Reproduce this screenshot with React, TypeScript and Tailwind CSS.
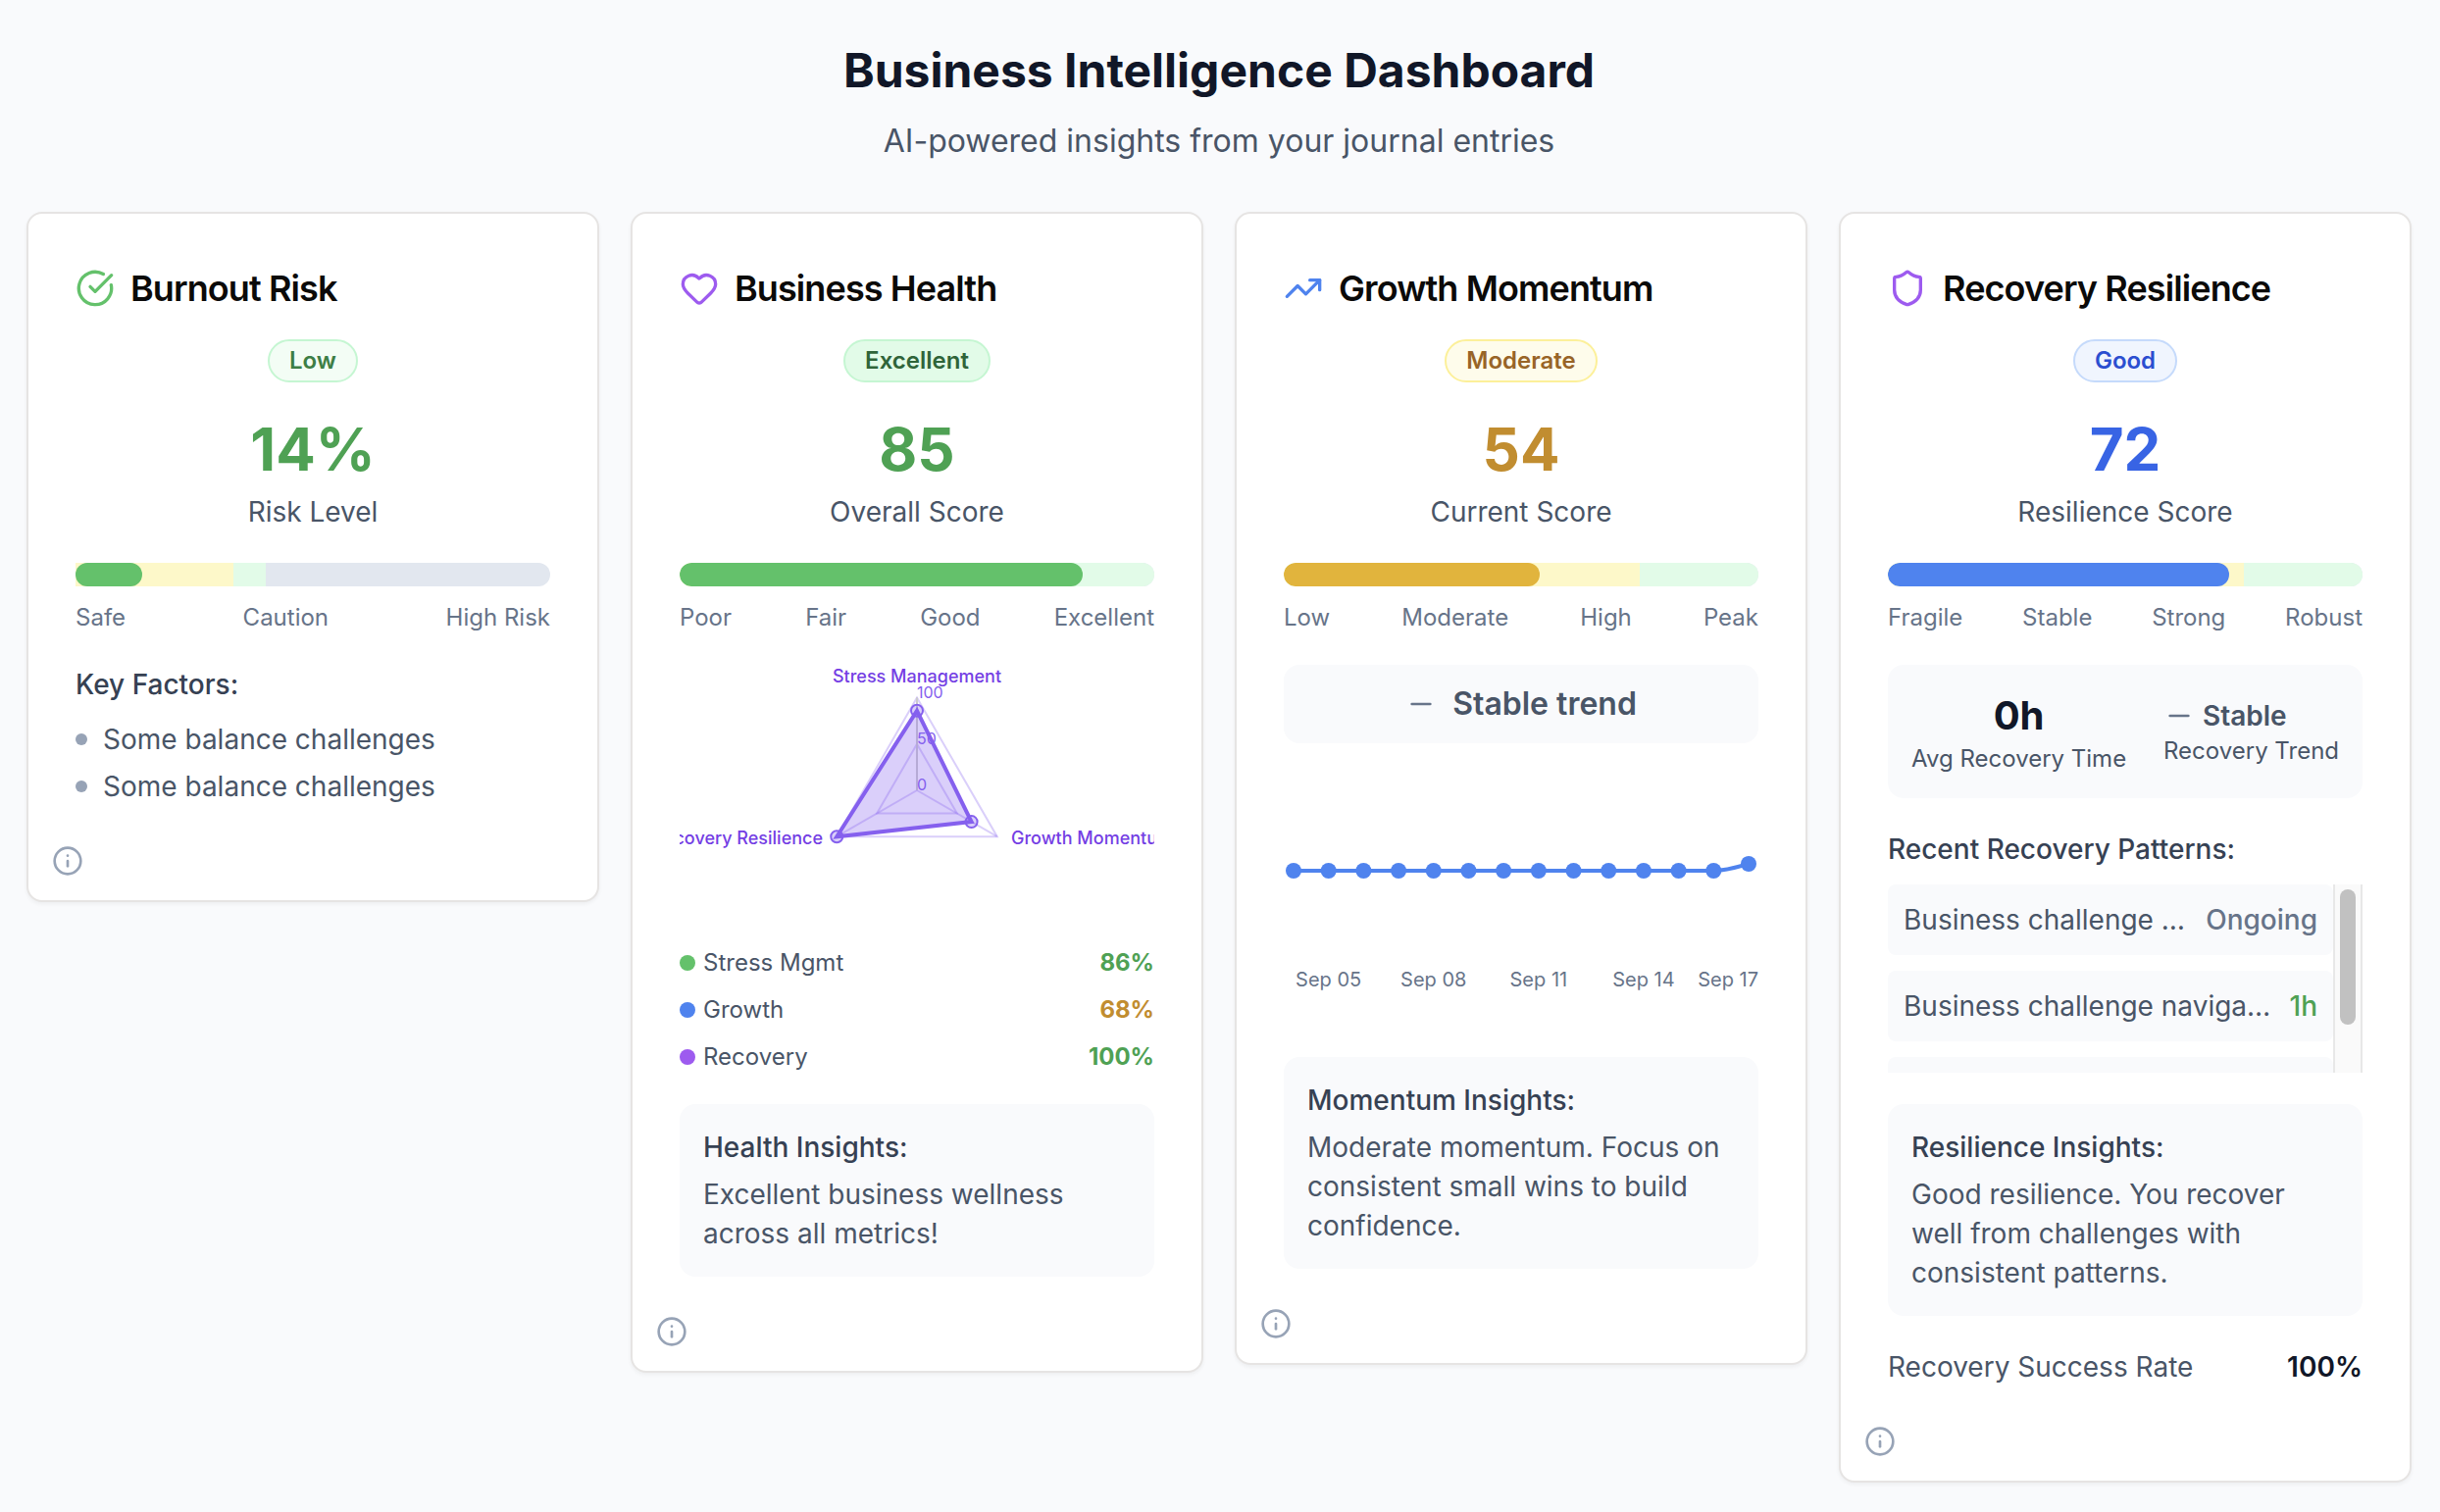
import type { ReactNode } from "react";
import { CircleCheckBig, Heart, Info, Minus, Shield, TrendingUp } from "lucide-react";

type Zone = { className: string; width: string };

function Card({ icon, title, children }: { icon: ReactNode; title: string; children: ReactNode }) {
  return (
    <section className="rounded-2xl border-2 border-[#e6e4e3] bg-white px-12 pt-12 pb-6 shadow-[0_2px_4px_0_rgba(0,0,0,0.05)]">
      <h2 className="flex items-center gap-4 text-4xl/[56px] font-semibold tracking-tight text-[#0b0a09]">
        {icon}
        {title}
      </h2>
      {children}
      <button
        type="button"
        aria-label={`About ${title}`}
        className="mt-10 -ml-6 block text-[#97a3b6]"
      >
        <Info className="size-8" />
      </button>
    </section>
  );
}

function Score({
  badge,
  badgeClass,
  value,
  valueClass,
  label,
}: {
  badge: string;
  badgeClass: string;
  value: string;
  valueClass: string;
  label: string;
}) {
  return (
    <div className="mt-6 flex flex-col items-center">
      <span className={`rounded-full border-2 px-5 py-1 text-2xl/8 font-semibold ${badgeClass}`}>{badge}</span>
      <span className={`mt-8 text-6xl/[72px] font-bold ${valueClass}`}>{value}</span>
      <span className="mt-2 text-[28px]/10 text-[#495567]">{label}</span>
    </div>
  );
}

function Gauge({
  value,
  fill,
  zones,
  labels,
  clip = true,
}: {
  value: number;
  fill: string;
  zones: Zone[];
  labels: string[];
  clip?: boolean;
}) {
  return (
    <div className="mt-8">
      <div className={`relative h-6 rounded-full bg-[#e2e7ef] ${clip ? "overflow-hidden" : ""}`}>
        {zones.map((z) => (
          <div key={z.className} className={`absolute inset-y-0 left-0 ${z.className}`} style={{ width: z.width }} />
        ))}
        <div className={`absolute inset-y-0 left-0 rounded-full ${fill}`} style={{ width: `${value}%` }} />
      </div>
      <div className="mt-4 flex justify-between text-2xl/8 text-[#677489]">
        {labels.map((l) => (
          <span key={l}>{l}</span>
        ))}
      </div>
    </div>
  );
}

function Insight({ title, children }: { title: string; children: ReactNode }) {
  return (
    <div className="mt-8 rounded-2xl bg-[#f9fafc] p-6 text-[28px]/10">
      <h3 className="font-medium text-[#364153]">{title}</h3>
      <p className="mt-2 text-[#495567]">{children}</p>
    </div>
  );
}

const CX = 242;
const CY = 128;
const R = 94.4;
const polar = (r: number, deg: number) => {
  const a = (deg * Math.PI) / 180;
  return [CX + r * Math.cos(a), CY - r * Math.sin(a)] as const;
};
const ANGLES = [90, -30, -150];
const ring = (rs: number[]) => rs.map((r, i) => polar(r, ANGLES[i]).join(",")).join(" ");

function RadarChart() {
  const values = [86, 68, 100].map((v) => (v / 100) * R);
  return (
    <svg viewBox="0 0 484 256" className="mt-8 h-64 w-full overflow-hidden font-[Inter,sans-serif]">
      <g stroke="#8560ee" strokeOpacity="0.3" strokeWidth="2" fill="none">
        {ANGLES.map((a) => {
          const [x, y] = polar(R, a);
          return <line key={a} x1={CX} y1={CY} x2={x} y2={y} />;
        })}
        <polygon points={ring([R / 2, R / 2, R / 2])} />
        <polygon points={ring([R, R, R])} />
      </g>
      <line x1={CX} y1={CY} x2={CX} y2={CY - R} stroke="#cccccc" strokeWidth="2" />
      <g fill="#8560ee" fontSize="16">
        <text x={CX} y="128">0</text>
        <text x={CX} y="81">50</text>
        <text x={CX} y="34">100</text>
      </g>
      <polygon points={ring(values)} fill="#8560ee" fillOpacity="0.3" stroke="#8560ee" strokeWidth="4" />
      {values.map((v, i) => {
        const [x, y] = polar(v, ANGLES[i]);
        return (
          <circle key={i} cx={x} cy={y} r="6" fill="#8560ee" fillOpacity="0.3" stroke="#8560ee" strokeWidth="2" />
        );
      })}
      <g fill="#743ee4" fontSize="18" fontWeight="500">
        <text x={CX} y="18" textAnchor="middle">Stress Management</text>
        <text x="338" y="183">Growth Momentum</text>
        <text x="146" y="183" textAnchor="end">Recovery Resilience</text>
      </g>
    </svg>
  );
}

function MomentumChart() {
  const step = 464 / 13;
  const pts = Array.from({ length: 14 }, (_, i) => [10 + i * step, i === 13 ? 91 : 98]);
  const ticks: [string, number][] = [
    ["Sep 05", 1],
    ["Sep 08", 4],
    ["Sep 11", 7],
    ["Sep 14", 10],
  ];
  return (
    <svg viewBox="0 0 484 256" className="mt-8 h-64 w-full font-[Inter,sans-serif]">
      <path
        d={`M10 98H${10 + 12 * step}C${10 + 12.33 * step} 98 ${10 + 12.67 * step} 94.5 474 91`}
        fill="none"
        stroke="#4f83ee"
        strokeWidth="4"
      />
      {pts.map(([x, y]) => (
        <circle key={x} cx={x} cy={y} r="8" fill="#4f83ee" />
      ))}
      <g fill="#677489" fontSize="20">
        {ticks.map(([t, i]) => (
          <text key={t} x={10 + i * step} y="216" textAnchor="middle">
            {t}
          </text>
        ))}
        <text x="484" y="216" textAnchor="end">Sep 17</text>
      </g>
    </svg>
  );
}

const metrics = [
  { name: "Stress Mgmt", value: "86%", dot: "bg-[#64c16b]", text: "text-[#4fa154]" },
  { name: "Growth", value: "68%", dot: "bg-[#4f83ee]", text: "text-[#c18d30]" },
  { name: "Recovery", value: "100%", dot: "bg-[#9d5bef]", text: "text-[#4fa154]" },
];

const patterns = [
  { text: "Business challenge navigated", time: "Ongoing", className: "text-[#677489]" },
  { text: "Business challenge navigated", time: "1h", className: "text-[#4fa154]" },
  { text: "Business challenge navigated", time: "1h", className: "text-[#4fa154]" },
];

const fullZones: Zone[] = [
  { className: "bg-[#e2fbe8]", width: "100%" },
  { className: "bg-[#fdf8c9]", width: "75%" },
];

export default function App() {
  return (
    <main className="min-h-screen bg-[#f9fafc] pt-10 pr-[29px] pb-7 pl-[27px] font-[Inter,sans-serif]">
      <header className="text-center">
        <h1 className="text-5xl/[64px] font-bold text-[#111728]">Business Intelligence Dashboard</h1>
        <p className="mt-4 text-[32px]/[48px] text-[#495567]">AI-powered insights from your journal entries</p>
      </header>

      <div className="mt-12 grid grid-cols-4 items-start gap-8">
        <Card title="Burnout Risk" icon={<CircleCheckBig className="size-10 text-[#64c16b]" />}>
          <Score
            badge="Low"
            badgeClass="border-[#c5f6d2] bg-[#f3fdf5] text-[#3d7e45]"
            value="14%"
            valueClass="text-[#4fa154]"
            label="Risk Level"
          />
          <Gauge
            value={14}
            fill="bg-[#64c16b]"
            clip={false}
            zones={[
              { className: "bg-[#e2fbe8]", width: "40%" },
              { className: "bg-[#fdf8c9]", width: "33.3%" },
            ]}
            labels={["Safe", "Caution", "High Risk"]}
          />
          <h3 className="mt-8 text-[28px]/10 font-medium text-[#364153]">Key Factors:</h3>
          <ul className="mt-4 flex flex-col gap-2 text-[28px]/10 text-[#495567]">
            {["first", "second"].map((k) => (
              <li key={k} className="flex items-center gap-4">
                <span className="size-3 rounded-full bg-[#97a3b6]" />
                Some balance challenges
              </li>
            ))}
          </ul>
        </Card>

        <Card title="Business Health" icon={<Heart className="size-10 text-[#9d5bef]" />}>
          <Score
            badge="Excellent"
            badgeClass="border-[#c5f6d2] bg-[#e2fbe8] text-[#2f6439]"
            value="85"
            valueClass="text-[#4fa154]"
            label="Overall Score"
          />
          <Gauge value={85} fill="bg-[#64c16b]" zones={fullZones} labels={["Poor", "Fair", "Good", "Excellent"]} />
          <RadarChart />
          <dl className="mt-8 flex flex-col gap-4 text-2xl/8">
            {metrics.map((m) => (
              <div key={m.name} className="flex items-center gap-2">
                <span className={`size-4 rounded-full ${m.dot}`} />
                <dt className="text-[#495567]">{m.name}</dt>
                <dd className={`ml-auto font-bold ${m.text}`}>{m.value}</dd>
              </div>
            ))}
          </dl>
          <Insight title="Health Insights:">Excellent business wellness across all metrics!</Insight>
        </Card>

        <Card title="Growth Momentum" icon={<TrendingUp className="size-10 text-[#4f83ee]" />}>
          <Score
            badge="Moderate"
            badgeClass="border-[#fcf09a] bg-[#fefceb] text-[#986427]"
            value="54"
            valueClass="text-[#c18d30]"
            label="Current Score"
          />
          <Gauge value={54} fill="bg-[#e1b43d]" zones={fullZones} labels={["Low", "Moderate", "High", "Peak"]} />
          <div className="mt-8 flex items-center justify-center gap-4 rounded-2xl bg-[#f9fafc] p-4 text-[32px]/[48px] font-semibold text-[#495567]">
            <Minus className="size-8 text-[#677489]" />
            Stable trend
          </div>
          <MomentumChart />
          <Insight title="Momentum Insights:">
            Moderate momentum. Focus on consistent small wins to build confidence.
          </Insight>
        </Card>

        <Card title="Recovery Resilience" icon={<Shield className="size-10 text-[#9d5bef]" />}>
          <Score
            badge="Good"
            badgeClass="border-[#c5dafb] bg-[#f0f5fe] text-[#2b4ed0]"
            value="72"
            valueClass="text-[#3864e4]"
            label="Resilience Score"
          />
          <Gauge value={72} fill="bg-[#4f83ee]" zones={fullZones} labels={["Fragile", "Stable", "Strong", "Robust"]} />
          <div className="mt-8 flex items-center justify-between rounded-2xl bg-[#f9fafc] p-6 text-2xl/8 text-[#495567]">
            <div className="text-center">
              <div className="text-[40px]/[56px] font-bold text-[#111728]">0h</div>
              <div>Avg Recovery Time</div>
            </div>
            <div>
              <div className="flex items-center gap-2 text-[28px]/10 font-semibold">
                <Minus className="size-8 text-[#677489]" />
                Stable
              </div>
              <div>Recovery Trend</div>
            </div>
          </div>
          <h3 className="mt-8 text-[28px]/10 font-medium text-[#364153]">Recent Recovery Patterns:</h3>
          <div className="mt-4 flex h-48 overflow-hidden">
            <ul className="flex min-w-0 flex-1 flex-col gap-4 text-[28px]/10">
              {patterns.map((p, i) => (
                <li key={i} className="flex shrink-0 gap-4 rounded-lg bg-[#f9fafc] p-4">
                  <span className="min-w-0 flex-1 truncate text-[#495567]">{p.text}</span>
                  <span className={`font-medium ${p.className}`}>{p.time}</span>
                </li>
              ))}
            </ul>
            <div className="w-[30px] border-x-2 border-[#e8e8e8] bg-[#fafafa] px-[5px] pt-[5px]">
              <div className="h-[138px] rounded-full bg-[#c1c1c1]" />
            </div>
          </div>
          <Insight title="Resilience Insights:">
            Good resilience. You recover well from challenges with consistent patterns.
          </Insight>
          <div className="mt-8 flex justify-between text-[28px]/10 text-[#495567]">
            <span>Recovery Success Rate</span>
            <span className="font-semibold text-[#111728]">100%</span>
          </div>
        </Card>
      </div>
    </main>
  );
}
